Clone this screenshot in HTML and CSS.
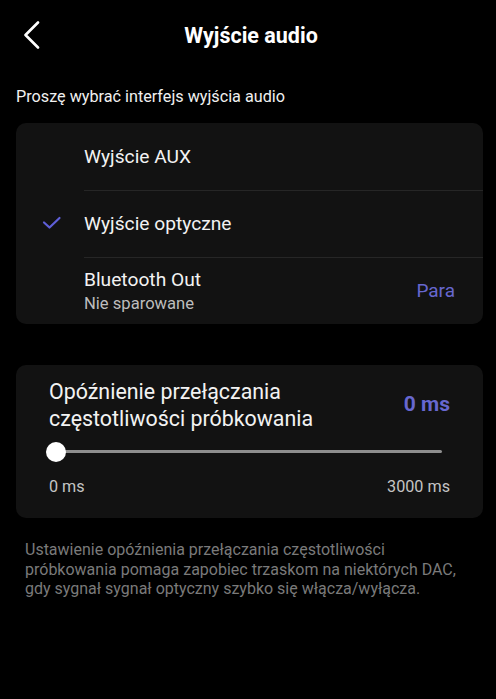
FILE: index.html
```html
<!DOCTYPE html>
<html lang="pl">
<head>
    <meta charset="UTF-8">
    <meta name="viewport" content="width=device-width, initial-scale=1.0">
    <title>Wyjście audio</title>
    <link rel="stylesheet" href="styles.css">
</head>
<body>

<div class="header">
    <svg class="back" width="24" height="32" viewBox="0 0 24 32">
        <path d="M14 3.5 L1.5 16 L14 28.5" fill="none" stroke="#fff" stroke-width="2.6" stroke-linecap="round" stroke-linejoin="round"/>
    </svg>
    <h1>Wyjście audio</h1>
</div>

<p class="hint">Proszę wybrać interfejs wyjścia audio</p>

<div class="card outputs">
    <div class="row">
        <span class="check"></span>
        <div class="label">Wyjście AUX</div>
    </div>
    <div class="row">
        <span class="check">
            <svg width="20" height="16" viewBox="0 0 20 16">
                <path d="M2 7.5 L7.5 12.5 L17.5 3" fill="none" stroke="#5f5fd8" stroke-width="2.2" stroke-linecap="round" stroke-linejoin="round"/>
            </svg>
        </span>
        <div class="label">Wyjście optyczne</div>
    </div>
    <div class="row">
        <span class="check"></span>
        <div class="label">
            Bluetooth Out
            <div class="sub">Nie sparowane</div>
        </div>
        <span class="pair">Para</span>
    </div>
</div>

<div class="card delay">
    <div class="delay-head">
        <div class="delay-title">Opóźnienie przełączania częstotliwości próbkowania</div>
        <div class="delay-value">0 ms</div>
    </div>
    <div class="slider">
        <div class="track"></div>
        <div class="thumb"></div>
    </div>
    <div class="range">
        <span>0 ms</span>
        <span>3000 ms</span>
    </div>
</div>

<p class="note">Ustawienie opóźnienia przełączania częstotliwości próbkowania pomaga zapobiec trzaskom na niektórych DAC, gdy sygnał sygnał optyczny szybko się włącza/wyłącza.</p>

</body>
</html>
```

FILE: styles.css
```css
body {
    font-family: 'Roboto', 'Noto Sans', sans-serif;
    background-color: #000;
    color: #fff;
    margin: 0;
    padding: 0 13px 0 16px;
}
.header {
    position: relative;
    height: 70px;
    display: flex;
    align-items: center;
    justify-content: center;
}
.back {
    position: absolute;
    left: 8px;
    top: 19px;
}
h1 {
    margin: 0;
    font-size: 21.5px;
    font-weight: bold;
    padding-left: 3px;
}
.hint {
    margin: 17px 0 17px 0;
    font-size: 16.2px;
    line-height: 19px;
    color: #f0f0f0;
}
.card {
    background-color: #121212;
    border-radius: 10px;
}
.row {
    display: flex;
    align-items: center;
    height: 67px;
    position: relative;
}
.row + .row::before {
    content: "";
    position: absolute;
    top: 0;
    left: 68px;
    right: 0;
    height: 1px;
    background-color: #262626;
}
.check {
    width: 68px;
    display: flex;
    justify-content: flex-end;
    padding-right: 22px;
    box-sizing: border-box;
}
.check svg {
    display: block;
    margin-top: -2px;
}
.label {
    flex: 1;
    font-size: 19.2px;
    line-height: 23px;
    color: #f2f2f2;
}
.sub {
    font-size: 16.6px;
    line-height: 20px;
    margin-top: 3px;
    color: #bdbdbd;
}
.pair {
    font-size: 19px;
    color: #6767cf;
    margin-right: 28px;
}
.delay {
    margin-top: 41px;
    padding: 13px 33px 22px 33px;
}
.delay-head {
    display: flex;
    align-items: center;
    justify-content: space-between;
}
.delay-title {
    font-size: 21.4px;
    line-height: 27px;
    color: #f2f2f2;
    width: 300px;
}
.delay-value {
    font-size: 21px;
    font-weight: bold;
    color: #6767cf;
    margin-top: -2px;
}
.slider {
    position: relative;
    height: 20px;
    margin: 10px 8px 0 -3px;
}
.track {
    position: absolute;
    left: 10px;
    right: 0;
    top: 8px;
    height: 3px;
    background-color: #8e8e8e;
    border-radius: 2px;
}
.thumb {
    position: absolute;
    left: 0;
    top: 0;
    width: 20px;
    height: 20px;
    border-radius: 50%;
    background-color: #fff;
}
.range {
    display: flex;
    justify-content: space-between;
    margin-top: 15px;
    font-size: 16.2px;
    color: #c4c4c4;
}
.note {
    margin: 22px 0 0 9px;
    font-size: 16px;
    line-height: 19.5px;
    color: #7a7a7a;
    width: 448px;
}
```
